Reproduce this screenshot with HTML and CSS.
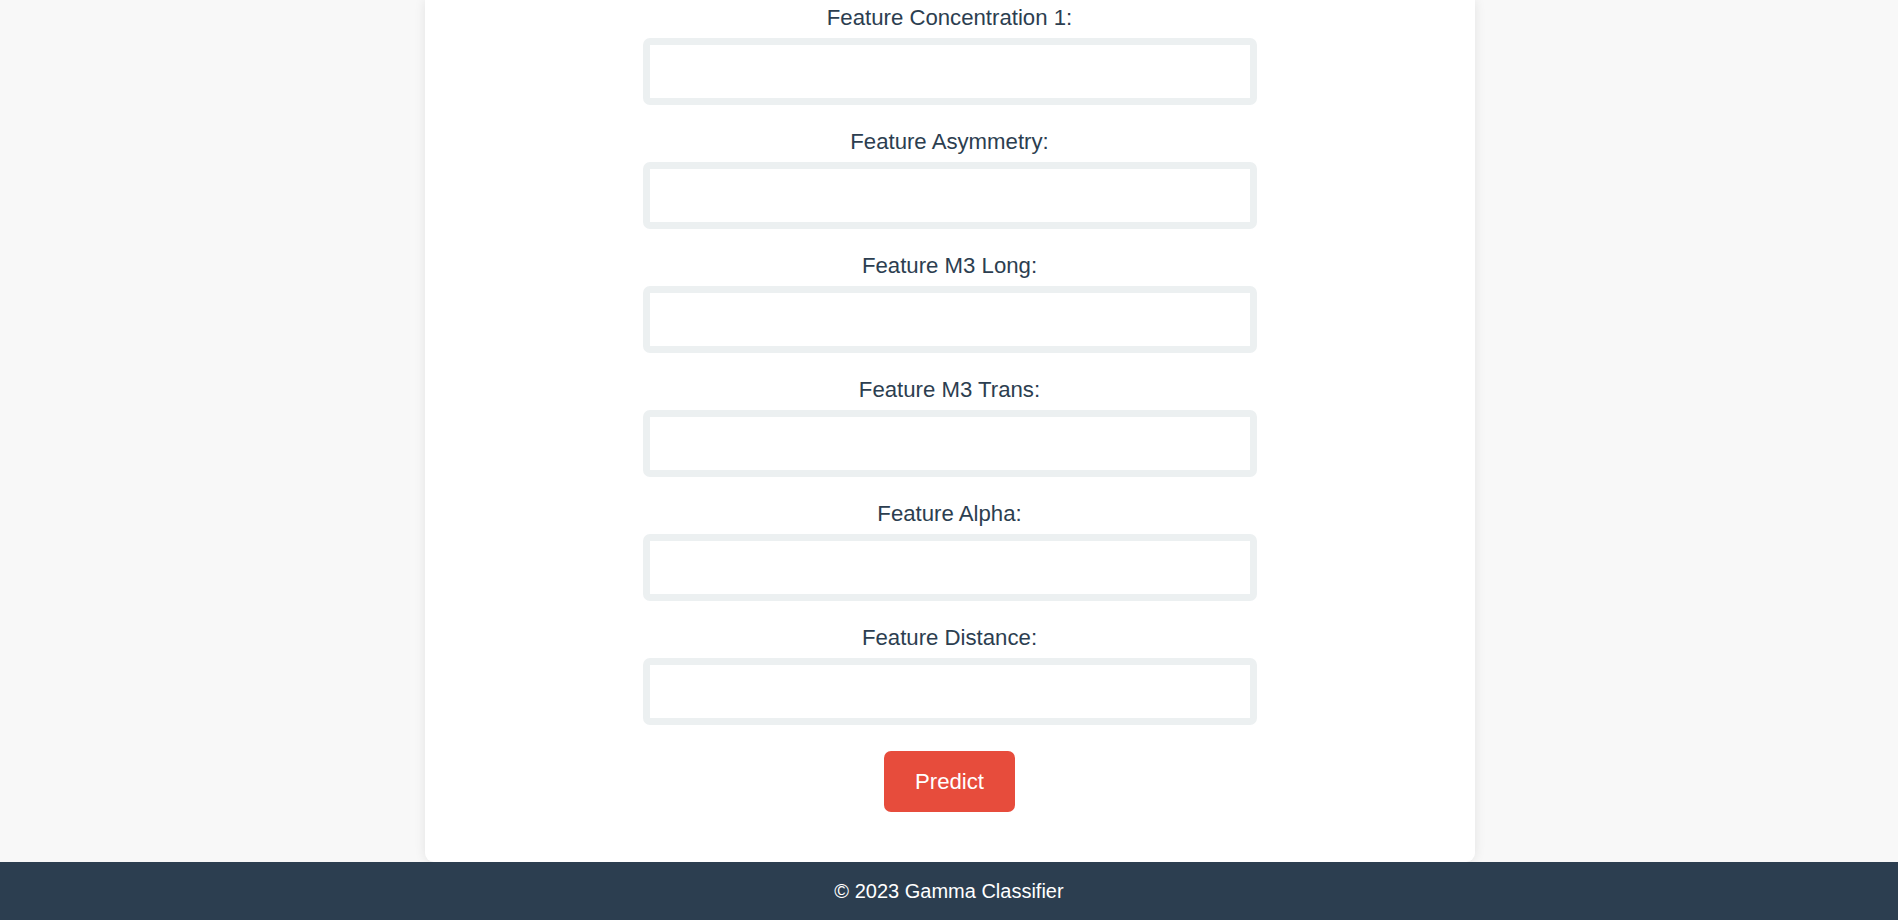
FILE: index.html
```html
<!DOCTYPE html>
<html lang="en">
<head>
<meta charset="utf-8">
<title>Gamma Classifier</title>
<link rel="stylesheet" href="styles.css">
</head>
<body>
<main class="page">
  <form class="card">
    <div class="field">
      <label class="label" for="f1">Feature Concentration 1:</label>
      <input class="input" id="f1" type="text">
    </div>
    <div class="field">
      <label class="label" for="f2">Feature Asymmetry:</label>
      <input class="input" id="f2" type="text">
    </div>
    <div class="field">
      <label class="label" for="f3">Feature M3 Long:</label>
      <input class="input" id="f3" type="text">
    </div>
    <div class="field">
      <label class="label" for="f4">Feature M3 Trans:</label>
      <input class="input" id="f4" type="text">
    </div>
    <div class="field">
      <label class="label" for="f5">Feature Alpha:</label>
      <input class="input" id="f5" type="text">
    </div>
    <div class="field">
      <label class="label" for="f6">Feature Distance:</label>
      <input class="input" id="f6" type="text">
    </div>
    <button class="btn" type="button">Predict</button>
  </form>
</main>
<footer class="footer">© 2023 Gamma Classifier</footer>
</body>
</html>
```

FILE: styles.css
```css
* { box-sizing: border-box; }

html, body {
  margin: 0;
  padding: 0;
}

body {
  background: #f8f8f8;
  font-family: "Liberation Sans", Arial, sans-serif;
  color: #2c3e50;
  display: flex;
  flex-direction: column;
  min-height: 920px;
}

.page {
  flex: 1;
  display: flex;
  justify-content: center;
  padding-left: 1px;
}

.card {
  width: 1050px;
  background: #ffffff;
  border-radius: 0 0 9px 9px;
  box-shadow: 0 0 12px rgba(0, 0, 0, 0.09);
  padding: 5px 0 50px;
  display: flex;
  flex-direction: column;
  align-items: center;
}

.field {
  display: flex;
  flex-direction: column;
  align-items: center;
  margin-bottom: 24px;
}

.label {
  display: block;
  font-size: 22.2px;
  line-height: 26px;
  margin-bottom: 7px;
  color: #2c3e50;
}

.input {
  width: 614px;
  height: 67px;
  border: 7px solid #ecf0f1;
  border-radius: 7px;
  background: #ffffff;
  outline: none;
  font-family: inherit;
  font-size: 20px;
}

.btn {
  margin-top: 2px;
  width: 131px;
  height: 61px;
  border: none;
  border-radius: 7px;
  background: #e74c3c;
  color: #ffffff;
  font-family: inherit;
  font-size: 22.2px;
  line-height: 26px;
  padding: 0;
  cursor: pointer;
}

.footer {
  height: 58px;
  background: #2c3e50;
  color: #ffffff;
  font-size: 20px;
  display: flex;
  align-items: center;
  justify-content: center;
}
```
